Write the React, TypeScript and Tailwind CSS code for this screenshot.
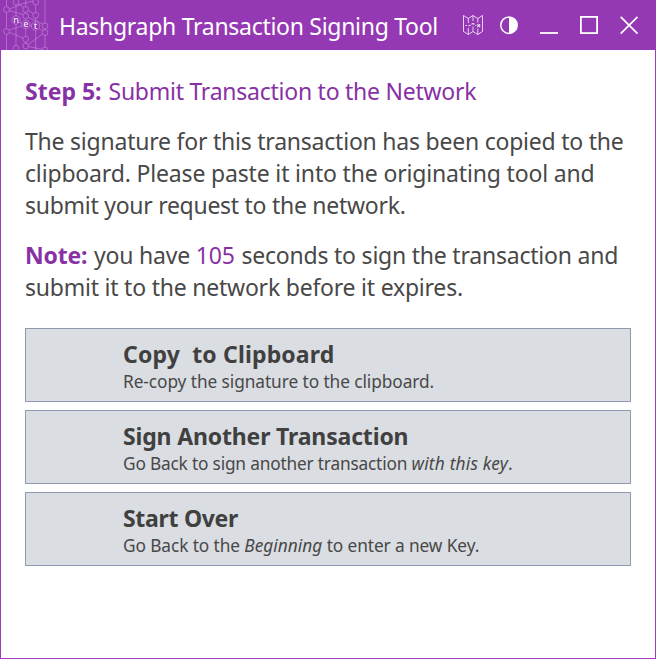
import type { ReactNode } from "react";

function Logo() {
  const nodes: [number, number][] = [
    [6.5, 9.5], [16, 2], [35.7, 2], [25.7, 9.5], [25.7, 16], [35.7, 15.3], [45, 26],
    [45, 32.5], [6.5, 31.5], [25.7, 39.2], [25.7, 46], [16, 48.3], [45, 50],
  ];
  return (
    <svg width="49" height="50" viewBox="0 0 49 50" className="shrink-0" fill="none">
      <g stroke="#d3a6e4" strokeOpacity="0.5" strokeWidth="0.9">
        <path d="M6.5 0V6.5M6.5 12.5V28.5M6.5 34.5V50M16 5V16M16 24V45.5M25.7 0V6.5M25.7 12.5V13M25.7 19V20.5M25.7 28.5V36.5M25.7 42V43M35.7 5V12.5M35.7 18V22M35.7 30V50M45 0V23M45 29V29.5M45 35.5V47" />
        <path d="M9.5 9L23 3.5L33 1M18.5 3.5L23.5 7.5M9 10.5L23 14.5M28.5 10.5L33.2 13.5M28.5 17.5L43 24M19.5 22.5L22 23.5M29.5 25.5L32 26M39 28.5L42.5 31M9.5 32.5L23 38M9 30L22 26M42.5 34L28.5 44.5M28.5 46.5L42.5 49.5" />
        {nodes.map(([x, y]) => (
          <circle key={`${x}-${y}`} cx={x} cy={y} r="2.9" />
        ))}
        <circle cx="16" cy="20" r="4.2" />
        <circle cx="25.7" cy="24.5" r="4.2" />
        <circle cx="35.5" cy="26" r="4.2" />
      </g>
      <g fill="#fff" fillOpacity="0.92" fontFamily="Noto Sans" fontSize="9" fontWeight="500" textAnchor="middle">
        <text x="16" y="22.6">n</text>
        <text x="25.8" y="27.3">e</text>
        <text x="35.5" y="29">t</text>
      </g>
    </svg>
  );
}

function Controls() {
  return (
    <svg width="196" height="50" viewBox="460 0 196 50" className="ml-auto shrink-0" fill="none" stroke="#fff">
      <g strokeWidth="0.9" strokeOpacity="0.85">
        <path d="M463.5 15.5L468.3 18.5L473 15.5L477.8 18.5L482.5 15.5V31.5L477.8 34.5L473 31.5L468.3 34.5L463.5 31.5Z" />
        <path d="M468.3 18.5V23M468.3 28V34.5M473 15.5V21M473 26.5V31.5M477.8 18.5V22.5M477.8 28.5V34.5" />
        <path d="M465.5 25.5h1.5M468.5 26l2-1M471.5 24.3q1.5-1.3 3 0M475.3 25.5h1" strokeWidth="1.1" />
        <path d="M477.3 24.2l2.8 2.8M480.1 24.2l-2.8 2.8" strokeWidth="1.1" />
      </g>
      <circle cx="509" cy="25.2" r="8.2" strokeWidth="1.5" />
      <path d="M509 17a8.2 8.2 0 0 1 0 16.4z" fill="#fff" stroke="none" />
      <path d="M540 33h18" strokeWidth="1.8" />
      <rect x="580.9" y="16.9" width="16.2" height="16.2" strokeWidth="1.8" />
      <path d="M620.7 16.8L637.5 33.6M637.5 16.8L620.7 33.6" strokeWidth="1.7" />
    </svg>
  );
}

function Action({ title, children }: { title: ReactNode; children: ReactNode }) {
  return (
    <button className="flex h-[74px] w-full flex-col items-start justify-start border border-[#8f9ab2] bg-[#dadde2] pt-2.5 pl-[97px] text-left whitespace-pre">
      <div className="text-[23px] leading-[30px] font-bold text-[#404040]">{title}</div>
      <div className="text-[17.3px] leading-[26px]">{children}</div>
    </button>
  );
}

export default function App() {
  return (
    <div className="flex h-[659px] w-[656px] flex-col bg-white font-['Noto_Sans',sans-serif] text-[23px] leading-8 text-[#484848]">
      <header className="flex h-[50px] items-center bg-[#9439b3] text-white">
        <Logo />
        <h1 className="pt-0.5 pl-2.5 tracking-[-0.29px] whitespace-nowrap">Hashgraph Transaction Signing Tool</h1>
        <Controls />
      </header>
      <main className="flex-1 border-x border-b border-[#9c3fbc] px-6 pt-[25px] whitespace-nowrap">
        <h2 className="text-[#8731a5]">
          <b className="mr-px">Step 5:</b> <span className="tracking-[-0.25px]">Submit Transaction to the Network</span>
        </h2>
        <p className="mt-[18px]">
          <span className="block tracking-[-0.225px]">The signature for this transaction has been copied to the</span>
          <span className="block tracking-[-0.166px]">clipboard. Please paste it into the originating tool and</span>
          <span className="block tracking-[-0.275px]">submit your request to the network.</span>
        </p>
        <p className="mt-[18px] tracking-[-0.2px]">
          <b className="mr-px text-[#8731a5]">Note:</b> you have <span className="mr-px text-[#8731a5]">105</span> <span className="tracking-[-0.22px]">seconds to sign the transaction and</span>
          <span className="block tracking-[-0.22px]">submit it to the network before it expires.</span>
        </p>
        <div className="mt-[25px] flex flex-col gap-2">
          <Action title={<span className="tracking-[0.15px]">{"Copy  to Clipboard"}</span>}>
            <span className="tracking-[-0.08px]">Re-copy the signature to the clipboard.</span>
          </Action>
          <Action title={<span className="tracking-[-0.16px]">Sign Another Transaction</span>}>
            <span className="tracking-[-0.19px]">Go Back to sign another transaction </span>
            <i className="tracking-[0.2px]">with this key</i>.
          </Action>
          <Action title={<span className="tracking-[-0.3px]">Start Over</span>}>
            <span className="tracking-[-0.1px]">Go Back to the </span>
            <i>Beginning</i>
            <span className="tracking-[-0.1px]"> to enter a new Key.</span>
          </Action>
        </div>
      </main>
    </div>
  );
}
